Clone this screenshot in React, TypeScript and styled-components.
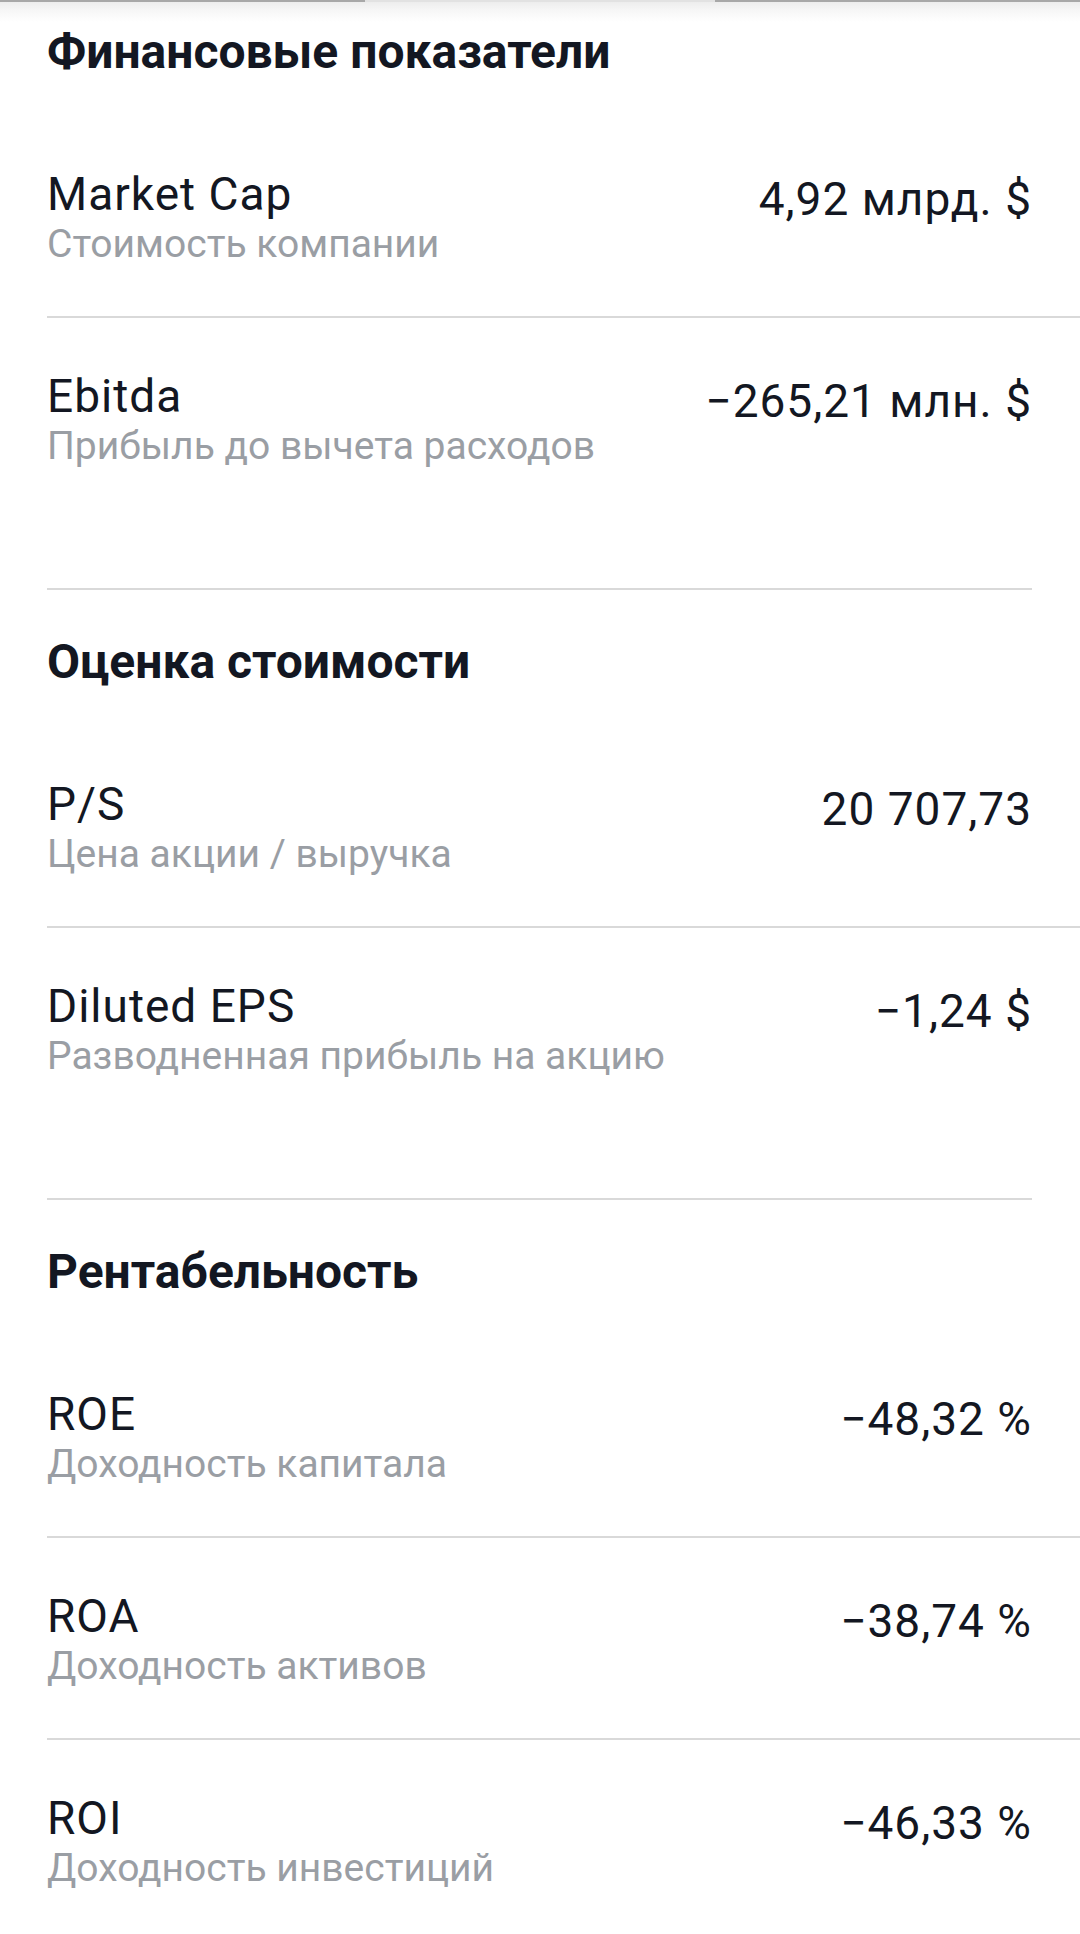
import styled, { createGlobalStyle } from 'styled-components';
import type { FC } from 'react';

const GlobalStyle = createGlobalStyle`
  html, body {
    margin: 0;
    padding: 0;
    background: #ffffff;
  }
  body {
    font-family: Roboto, 'Noto Sans', 'Liberation Sans', sans-serif;
    color: #131722;
    -webkit-font-smoothing: antialiased;
  }
`;

const Page = styled.div`
  width: 1080px;
  height: 1934px;
  overflow: hidden;
  background: #ffffff;
`;

const TopShade = styled.div`
  height: 22px;
  display: flex;
  align-items: flex-start;
  background: linear-gradient(to bottom, #ebebeb 0%, #f6f6f6 45%, #ffffff 100%);
`;

const ShadeEdge = styled.div<{ $light?: boolean; $width: number }>`
  width: ${(p) => p.$width}px;
  height: 2px;
  background: ${(p) => (p.$light ? '#e2e2e2' : '#a8a8a8')};
`;

const Section = styled.section<{ $first?: boolean }>`
  padding-top: ${(p) => (p.$first ? 0 : 42)}px;
  padding-left: 47px;
`;

const SectionTitle = styled.h2`
  margin: 0 0 34px;
  font-size: 48px;
  line-height: 60px;
  font-weight: 700;
  color: #131722;
`;

const Row = styled.div<{ $last?: boolean }>`
  display: flex;
  justify-content: space-between;
  align-items: flex-start;
  padding: 53px 48px ${(p) => (p.$last ? 117 : 47)}px 0;
  border-bottom: ${(p) => (p.$last ? 'none' : '2px solid #d9d9d9')};
`;

const Labels = styled.div`
  display: flex;
  flex-direction: column;
`;

const Name = styled.div`
  font-size: 46px;
  line-height: 50px;
  letter-spacing: 1px;
  color: #131722;
`;

const Hint = styled.div`
  font-size: 39px;
  line-height: 50px;
  color: #9a9ea4;
`;

const Value = styled.div`
  margin-top: 5px;
  font-size: 46px;
  line-height: 50px;
  letter-spacing: 1px;
  color: #131722;
  white-space: nowrap;
`;

const SectionRule = styled.div`
  height: 2px;
  margin-right: 48px;
  background: #d9d9d9;
`;

interface Metric {
  name: string;
  hint: string;
  value: string;
}

interface Group {
  title: string;
  metrics: Metric[];
  closed?: boolean;
}

const groups: Group[] = [
  {
    title: 'Финансовые показатели',
    closed: true,
    metrics: [
      { name: 'Market Cap', hint: 'Стоимость компании', value: '4,92 млрд. $' },
      { name: 'Ebitda', hint: 'Прибыль до вычета расходов', value: '−265,21 млн. $' },
    ],
  },
  {
    title: 'Оценка стоимости',
    closed: true,
    metrics: [
      { name: 'P/S', hint: 'Цена акции / выручка', value: '20 707,73' },
      { name: 'Diluted EPS', hint: 'Разводненная прибыль на акцию', value: '−1,24 $' },
    ],
  },
  {
    title: 'Рентабельность',
    metrics: [
      { name: 'ROE', hint: 'Доходность капитала', value: '−48,32 %' },
      { name: 'ROA', hint: 'Доходность активов', value: '−38,74 %' },
      { name: 'ROI', hint: 'Доходность инвестиций', value: '−46,33 %' },
    ],
  },
];

const MetricRow: FC<{ metric: Metric; last: boolean }> = ({ metric, last }) => (
  <Row $last={last}>
    <Labels>
      <Name>{metric.name}</Name>
      <Hint>{metric.hint}</Hint>
    </Labels>
    <Value>{metric.value}</Value>
  </Row>
);

const App: FC = () => (
  <>
    <GlobalStyle />
    <Page>
      <TopShade>
        <ShadeEdge $width={365} />
        <ShadeEdge $width={350} $light />
        <ShadeEdge $width={365} />
      </TopShade>
      {groups.map((group, i) => (
        <Section key={group.title} $first={i === 0}>
          <SectionTitle>{group.title}</SectionTitle>
          {group.metrics.map((m, j) => (
            <MetricRow
              key={m.name}
              metric={m}
              last={group.closed === true && j === group.metrics.length - 1}
            />
          ))}
          {group.closed && <SectionRule />}
        </Section>
      ))}
    </Page>
  </>
);

export default App;
